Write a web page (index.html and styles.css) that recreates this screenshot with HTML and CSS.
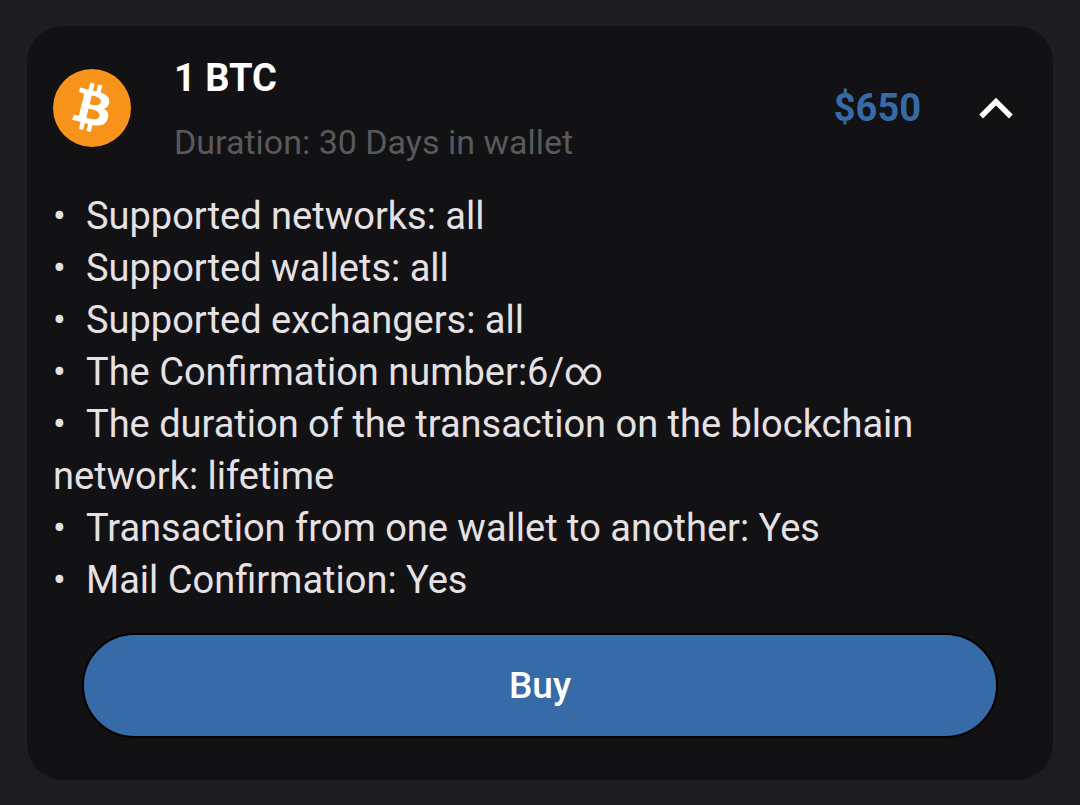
FILE: index.html
```html
<!DOCTYPE html>
<html lang="en">
<head>
    <meta charset="UTF-8">
    <meta name="viewport" content="width=device-width, initial-scale=1.0">
    <title>1 BTC</title>
    <link rel="stylesheet" href="styles.css">
</head>
<body>
    <div class="card">
        <div class="card-header">
            <svg class="coin" viewBox="0 0 64 64" role="img" aria-label="Bitcoin">
                <circle cx="32" cy="32" r="32" fill="#f7931a"/>
                <path fill="#fff" d="M46.1 27.44c.64-4.26-2.6-6.55-7.04-8.08l1.44-5.77-3.51-.88-1.4 5.62c-.93-.23-1.88-.45-2.82-.66l1.41-5.66-3.51-.87-1.44 5.77c-.77-.17-1.52-.35-2.25-.53v-.02l-4.84-1.21-.93 3.75s2.6.6 2.55.63c1.42.36 1.68 1.3 1.63 2.04l-1.64 6.58c.1.02.23.06.37.12l-.37-.09-2.3 9.2c-.17.44-.61 1.09-1.61.84.04.05-2.55-.64-2.55-.64l-1.74 4.02 4.57 1.14c.85.21 1.68.44 2.5.65l-1.45 5.84 3.5.87 1.44-5.77c.96.26 1.89.5 2.8.72l-1.43 5.75 3.51.87 1.45-5.82c5.99 1.13 10.49.67 12.39-4.74 1.52-4.36-.08-6.87-3.23-8.51 2.3-.53 4.03-2.04 4.49-5.16zm-8.02 11.25c-1.08 4.36-8.43 2-10.81 1.41l1.93-7.73c2.38.59 10.02 1.77 8.88 6.32zm1.09-11.32c-.99 3.97-7.1 1.95-9.09 1.46l1.75-7.02c1.98.5 8.37 1.42 7.34 5.56z"/>
            </svg>
            <div class="title">
                <h1>1 BTC</h1>
                <p>Duration: 30 Days in wallet</p>
            </div>
            <div class="price">$650</div>
            <button class="toggle" type="button" aria-label="Collapse" aria-expanded="true">
                <svg viewBox="0 0 32 20"><path d="M2 18L16 4l14 14" fill="none" stroke="#fff" stroke-width="5"/></svg>
            </button>
        </div>

        <ul class="details">
            <li>Supported networks: all</li>
            <li>Supported wallets: all</li>
            <li>Supported exchangers: all</li>
            <li>The Confirmation number:6/∞</li>
            <li>The duration of the transaction on the blockchain network: lifetime</li>
            <li>Transaction from one wallet to another: Yes</li>
            <li>Mail Confirmation: Yes</li>
        </ul>

        <button class="buy" type="button">Buy</button>
    </div>
</body>
</html>
```

FILE: styles.css
```css
* {
    box-sizing: border-box;
}

body {
    margin: 0;
    padding: 26px 27px;
    background-color: #1d1c21;
    color: #e5e1e5;
    font-family: Roboto, "Liberation Sans", sans-serif;
}

.card {
    padding: 26px;
    padding-bottom: 42px;
    border-radius: 36px;
    background-color: #121214;
}

.card-header {
    display: flex;
    align-items: center;
}

.coin {
    width: 78px;
    height: 78px;
    flex-shrink: 0;
}

.title {
    flex: 1;
    margin-left: 43px;
}

.title h1 {
    margin: 0;
    color: #fff;
    font-size: 38px;
    line-height: 52px;
    font-weight: 700;
}

.title p {
    margin: 16px 0 0;
    color: #59595b;
    font-size: 34px;
    line-height: 44px;
}

.price {
    color: #376ba7;
    font-size: 38px;
    font-weight: 700;
}

.toggle {
    margin: 0 14px 0 58px;
    padding: 0;
    border: none;
    background: none;
    cursor: pointer;
}

.toggle svg {
    display: block;
    width: 34px;
    height: 22px;
}

.details {
    margin: 26px 0 0;
    padding: 0;
    list-style: none;
    font-size: 38px;
    line-height: 52px;
}

.details li::before {
    content: "•";
    display: inline-block;
    width: 33px;
}

.buy {
    display: block;
    width: calc(100% - 58px);
    height: 105px;
    margin: 27px auto 0;
    border: 2px solid #000;
    border-radius: 53px;
    background-color: #376ba7;
    color: #fff;
    font-family: inherit;
    font-size: 37px;
    font-weight: 500;
    cursor: pointer;
}
```
